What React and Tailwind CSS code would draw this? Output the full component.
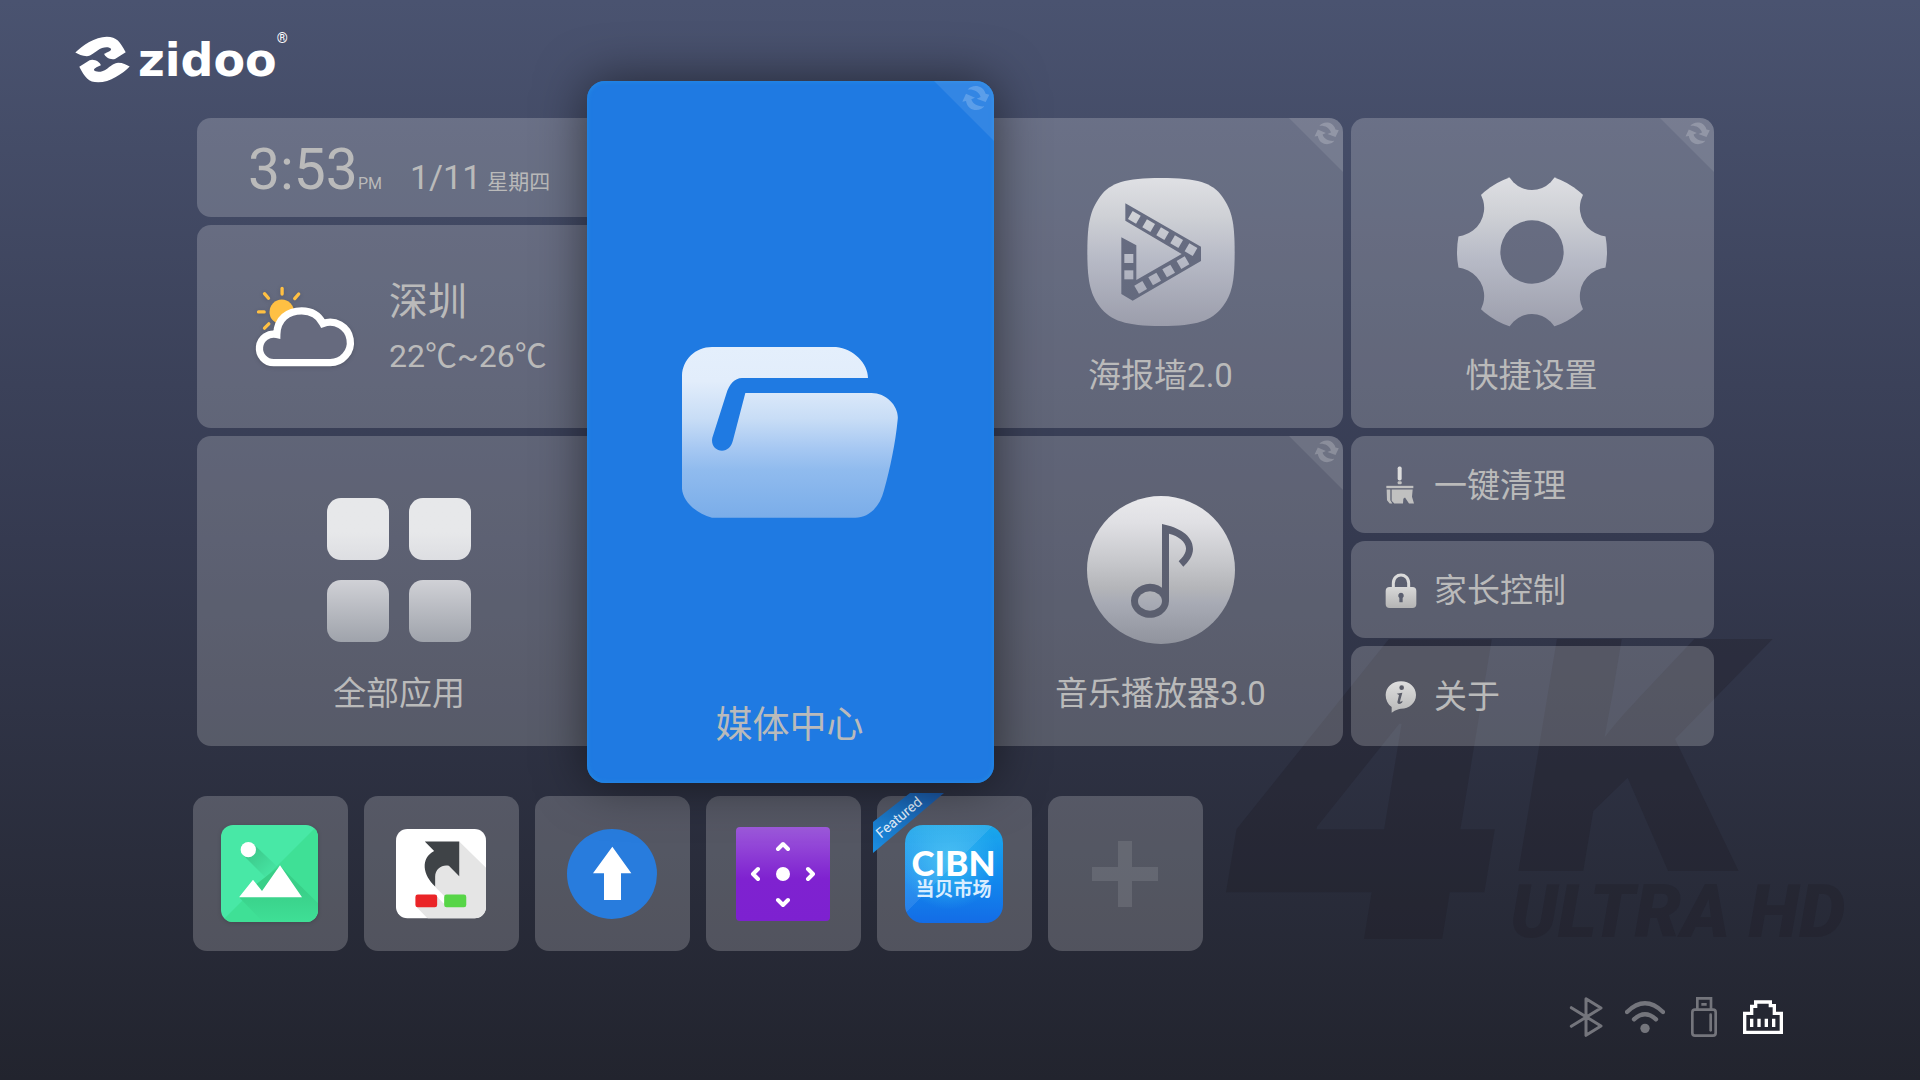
const SANS = "font-['Roboto','Noto_Sans_CJK_SC',sans-serif]"

function Fade({ id, stops }) {
  return (
    <linearGradient id={id} x1="0" y1="0" x2="0" y2="1">
      {stops.map(([offset, color]) => (
        <stop key={offset} offset={offset} stopColor={color} />
      ))}
    </linearGradient>
  )
}

const SILVER = [['0', '#dfe0e4'], ['0.25', '#cfd1d6'], ['0.55', '#b7bac6'], ['1', '#9b9dab']]

/* ---------- big tile icons ---------- */

function AppsIcon() {
  return (
    <div className="grid size-[148px] grid-cols-2 place-content-center justify-items-center gap-5 px-0.5">
      <span className="size-[62px] rounded-[14px] bg-linear-to-b from-[#e7e8ea] from-55% to-[#dddee2]" />
      <span className="size-[62px] rounded-[14px] bg-linear-to-b from-[#e7e8ea] from-55% to-[#dddee2]" />
      <span className="size-[62px] rounded-[14px] bg-linear-to-b from-[#d0d1d6] to-[#9fa3ab]" />
      <span className="size-[62px] rounded-[14px] bg-linear-to-b from-[#d0d1d6] to-[#9fa3ab]" />
    </div>
  )
}

function FolderIcon() {
  return (
    <svg viewBox="0 0 648 513" className="h-[171px] w-[216px]" aria-hidden="true">
      <defs>
        <Fade id="folder" stops={[['0', '#e4effc'], ['0.2', '#e2edfb'], ['0.42', '#c8ddf6'], ['0.6', '#a5c7f2'], ['0.72', '#90bbee'], ['1', '#7aade9']]} />
      </defs>
      <path
        fill="url(#folder)"
        d="M90 0H462C515 5 558 50 558 93H180C158 93 142 112 133 140L91 272C86 295 102 311 120 311C136 311 148 300 153 280L190 138H568C615 138 652 180 647 218C640 290 625 360 606 430C594 480 560 512 520 512H90C40 500 2 460 0 425V85C2 38 40 0 90 0Z"
      />
    </svg>
  )
}

function PosterIcon() {
  const top = [[495, 352], [538, 377], [580, 401], [622, 425], [665, 449]]
  const low = [[641, 488], [598, 513], [556, 537], [514, 562]]
  return (
    <svg viewBox="353 234 444 444" className="size-[148px]" aria-hidden="true">
      <defs>
        <Fade id="poster" stops={SILVER} />
        <mask id="film" maskUnits="userSpaceOnUse" x="353" y="234" width="444" height="444">
          <rect x="353" y="234" width="444" height="444" fill="#fff" />
          <polygon points="468,310 695,440 695,483 490,602 456,582 456,412 501,436 501,540 637,462 468,362" fill="#000" />
          {top.map(([x, y]) => (
            <rect key={x} x={x - 14} y={y - 14} width="28" height="28" fill="#fff" transform={`rotate(30 ${x} ${y})`} />
          ))}
          {low.map(([x, y]) => (
            <rect key={x} x={x - 14} y={y - 14} width="28" height="28" fill="#fff" transform={`rotate(-30 ${x} ${y})`} />
          ))}
          <rect x="465" y="462" width="27" height="27" fill="#fff" />
          <rect x="465" y="511" width="27" height="27" fill="#fff" />
        </mask>
      </defs>
      <path
        mask="url(#film)"
        fill="url(#poster)"
        d="M575 234C684 234 729 248 759 290C787 330 796 364 796 456C796 548 787 584 759 621C727 662 684 678 575 678C469 678 424 662 392 621C364 584 354 548 354 456C354 364 364 330 392 290C422 248 469 234 575 234Z"
      />
    </svg>
  )
}

function GearIcon() {
  return (
    <svg viewBox="384 234 444 444" className="size-[148px] overflow-visible" aria-hidden="true">
      <defs>
        <Fade id="gear" stops={SILVER} />
        <mask id="teeth" maskUnits="userSpaceOnUse" x="370" y="210" width="472" height="492">
          <rect x="370" y="210" width="472" height="492" fill="#fff" />
          <circle cx="606" cy="456" r="95" fill="#000" />
          {[0, 180].map((a) => (
            <circle key={a} cx="606" cy="191" r="79" fill="#000" transform={`rotate(${a} 606 456)`} />
          ))}
          {[60, 120, 240, 300].map((a) => (
            <circle key={a} cx="606" cy="191" r="86" fill="#000" transform={`rotate(${a} 606 456)`} />
          ))}
        </mask>
      </defs>
      <ellipse cx="606" cy="456" rx="225" ry="234" fill="url(#gear)" mask="url(#teeth)" />
    </svg>
  )
}

function MusicIcon() {
  return (
    <svg viewBox="351 228 444 444" className="size-[148px]" aria-hidden="true">
      <defs>
        <Fade id="music" stops={[['0', '#e9e9ec'], ['0.18', '#e0e0e4'], ['0.45', '#c6c7cb'], ['0.62', '#b4b5b9'], ['0.72', '#a8abb5'], ['1', '#90939d']]} />
        <mask id="note" maskUnits="userSpaceOnUse" x="351" y="228" width="444" height="444">
          <rect x="351" y="228" width="444" height="444" fill="#fff" />
          <path
            fill="#000"
            d="M576 312C625 322 669 345 669 387C669 408 655 426 640 440L626 424C640 410 648 400 648 385C648 365 625 348 597 341V543A57 51 0 1 1 576 503Z"
          />
          <ellipse cx="540" cy="543" rx="36" ry="29" fill="#fff" />
        </mask>
      </defs>
      <circle cx="573" cy="450" r="222" fill="url(#music)" mask="url(#note)" />
    </svg>
  )
}

function WeatherIcon() {
  return (
    <svg viewBox="229 556 291 244" className="h-[81px] w-[97px] overflow-visible drop-shadow-sm" aria-hidden="true">
      <g stroke="#ffc043" strokeWidth="10" strokeLinecap="round">
        <path d="M307 563V580M254 579L266 593M236 634H253M254 683L267 670M345 594L357 580" />
      </g>
      <circle cx="306" cy="634" r="37" fill="#ffc043" />
      <path
        d="M282 787A43 43 0 1 1 291 702C292 655 325 631 366 631C395 631 418 645 430 669A61 61 0 1 1 450 787Z"
        fill="#666a7e"
        stroke="#fff"
        strokeWidth="22"
      />
    </svg>
  )
}

/* ---------- small tile icons ---------- */

function BroomIcon() {
  return (
    <svg viewBox="164 136 96 116" className="h-[39px] w-8" fill="#c0c0c0" aria-hidden="true">
      <rect x="202" y="137" width="12" height="42" rx="5" fill="#dcdcdc" />
      <rect x="202" y="181" width="12" height="9" rx="3" />
      <rect x="168" y="195" width="81" height="7" />
      <path d="M169 206H180V238L186 248H178L170 238Z" />
      <path d="M184 206H247L245 228L251 248H236L224 230L219 234L218 248H192L184 240Z" />
    </svg>
  )
}

function LockIcon() {
  return (
    <svg viewBox="164 456 96 106" className="h-9 w-8" aria-hidden="true">
      <defs>
        <Fade id="lock" stops={[['0', '#d8d8d8'], ['1', '#b4b4b4']]} />
      </defs>
      <path d="M189 504V486C189 453 235 453 235 486V504" fill="none" stroke="#dadada" strokeWidth="9" />
      <path
        fill="url(#lock)"
        fillRule="evenodd"
        d="M178 497H246Q258 497 258 509V548Q258 560 246 560H178Q166 560 166 548V509Q166 497 178 497ZM212 514A9 9 0 0 0 207 530V543H217V530A9 9 0 0 0 212 514Z"
      />
    </svg>
  )
}

function InfoIcon() {
  return (
    <svg viewBox="164 782 96 96" className="size-8" aria-hidden="true">
      <defs>
        <Fade id="info" stops={[['0', '#dedede'], ['1', '#b9b9b9']]} />
      </defs>
      <path
        fill="url(#info)"
        d="M212 783C238 783 257 801 257 824C257 848 237 865 212 865C206 865 197 868 184 877V860C172 852 166 839 166 824C166 801 186 783 212 783Z"
      />
      <circle cx="214" cy="802" r="7" fill="#5a5c68" />
      <path d="M199 820L216 817L209 843Q209 846 217 841L215 847Q203 855 201 846L206 824Z" fill="#5a5c68" />
    </svg>
  )
}

/* ---------- dock icons ---------- */

function GalleryApp() {
  return (
    <svg viewBox="124 165 291 291" className="size-[97px] drop-shadow-sm" aria-hidden="true">
      <defs>
        <linearGradient id="sunShade" x1="0" y1="0" x2="1" y2="1">
          <stop offset="0.2" stopColor="#3cc98b" />
          <stop offset="0.9" stopColor="#3cc98b" stopOpacity="0" />
        </linearGradient>
        <linearGradient id="hillShade" x1="0" y1="0" x2="0" y2="1">
          <stop offset="0.4" stopColor="#39cf88" />
          <stop offset="1" stopColor="#3fdf96" />
        </linearGradient>
        <clipPath id="galleryClip">
          <rect x="124" y="165" width="291" height="291" rx="36" />
        </clipPath>
      </defs>
      <g clipPath="url(#galleryClip)">
        <rect x="124" y="165" width="291" height="291" fill="#48e8a6" />
        <path d="M415 165V456H124Z" fill="#3fe096" />
        <path d="M222 223L298 295L262 327L190 255Z" fill="url(#sunShade)" />
        <path d="M301 287L415 400V456H250L178 382Z" fill="url(#hillShade)" />
        <circle cx="206" cy="239" r="23" fill="#fff" />
        <path d="M178 382L220 329L247 363L301 286L367 382Z" fill="#fff" />
      </g>
    </svg>
  )
}

function RemapApp() {
  return (
    <svg viewBox="648 177 269 269" className="size-[90px]" aria-hidden="true">
      <defs>
        <clipPath id="remapClip">
          <rect x="648" y="177" width="269" height="267" rx="34" />
        </clipPath>
      </defs>
      <g clipPath="url(#remapClip)">
        <rect x="648" y="177" width="269" height="269" fill="#fff" />
        <path d="M837 214L917 293V446H744L710 411L770 372L792 396L765 350L740 300Z" fill="#e5e5e5" />
        <path d="M765 350L800 385L790 400L770 378L735 372V330Z" fill="#fff" />
        <path d="M765 349C728 315 720 265 762 243L734 214H837V318L806 287C788 282 765 294 765 320Z" fill="#3f4347" />
        <rect x="706" y="373" width="65" height="38" rx="7" fill="#ea2427" />
        <rect x="792" y="373" width="66" height="38" rx="7" fill="#57d547" />
      </g>
    </svg>
  )
}

function UpdateApp() {
  return (
    <svg viewBox="1161 174 270 270" className="size-[90px]" aria-hidden="true">
      <circle cx="1296" cy="309" r="135" fill="#287cdd" />
      <path d="M1297 227L1354 307H1323V387H1272V307H1239Z" fill="#fff" />
    </svg>
  )
}

function RemoteApp() {
  return (
    <svg viewBox="0 0 94 94" className="size-[94px]" aria-hidden="true">
      <defs>
        <Fade id="remote" stops={[['0', '#9d5adb'], ['0.55', '#7f22d0'], ['1', '#7d21d0']]} />
      </defs>
      <rect width="94" height="94" rx="4" fill="url(#remote)" />
      <circle cx="47" cy="47" r="7" fill="#fff" />
      <path
        d="M42 22L47 17L52 22M42 73L47 78L52 73M22 42L17 47L22 52M72 42L77 47L72 52"
        fill="none"
        stroke="#fff"
        strokeWidth="4"
        strokeLinecap="round"
        strokeLinejoin="round"
      />
    </svg>
  )
}

function MarketApp() {
  return (
    <span className="flex size-[98px] flex-col items-center justify-center rounded-[18px] bg-[linear-gradient(135deg,#ffffff18_45%,transparent_45%),radial-gradient(circle_at_45%_35%,#35b9f2,transparent_60%),linear-gradient(180deg,#1ba9ec,#1289ee_55%,#136ce6)] text-white">
      <span className="font-['Lato'] text-[35px] leading-8 font-black">CIBN</span>
      <span className="text-[19px] leading-6 font-bold text-[#d9edff]">当贝市场</span>
    </span>
  )
}

function FeaturedRibbon() {
  return (
    <svg viewBox="0 0 71 60" className="absolute -top-[3px] -left-1 h-[60px] w-[71px]">
      <defs>
        <linearGradient id="ribbon" x1="0" y1="1" x2="1" y2="0">
          <stop offset="0" stopColor="#1a8fe3" />
          <stop offset="1" stopColor="#1a539f" />
        </linearGradient>
      </defs>
      <polygon points="0,29 37,0 71,0 0,60" fill="url(#ribbon)" />
      <text x="29" y="28" transform="rotate(-40 29 28)" textAnchor="middle" fill="#e3effb" className="text-[14px]">
        Featured
      </text>
    </svg>
  )
}

function PlusIcon() {
  return (
    <svg viewBox="0 0 66 66" className="size-[66px]" aria-hidden="true">
      <path d="M26 0H40V26H66V40H40V66H26V40H0V26H26Z" fill="#fff" fillOpacity="0.1" />
    </svg>
  )
}

/* ---------- tiles ---------- */

const GLASS = 'rounded-[14px] bg-white/20'

function CornerBadge({ size = 'size-[54px]' }) {
  return (
    <svg viewBox="0 0 180 180" className={`absolute top-0 right-0 ${size}`} fill="#fff" aria-hidden="true">
      <path d="M0 0H180V180Z" fillOpacity="0.09" />
      <g fillOpacity="0.2">
        <path d="M101 26C112 12 145 8 155 38L166 41L155 63L128 53L140 48C134 30 116 24 101 26Z" />
        <path d="M96 38L123 50L112 55C116 70 134 78 151 76C140 92 102 94 96 60L85 62Z" />
      </g>
    </svg>
  )
}

function Tile({ icon, label, badge }) {
  return (
    <button
      type="button"
      className={`relative flex flex-col items-center overflow-hidden pt-[60px] pb-7 ${badge ? 'pr-0.5' : ''} ${GLASS}`}
    >
      {icon}
      <span className="mt-[26px] text-[33px] leading-12">{label}</span>
      {badge && <CornerBadge />}
    </button>
  )
}

function FocusedTile() {
  return (
    <button
      type="button"
      className="relative z-10 row-span-2 -mx-[22px] -my-[37px] flex flex-col items-center rounded-[18px] bg-[#1f7ae2] pt-[266px] pr-0.5 pb-[33px] shadow-[0_0_50px_rgba(0,0,0,0.5)]"
    >
      <span className="absolute inset-0 overflow-hidden rounded-[18px] shadow-[inset_0_0_4px_1px_#2389e4]">
        <CornerBadge size="size-[60px]" />
      </span>
      <FolderIcon />
      <span className="mt-auto text-[37px] leading-12">媒体中心</span>
    </button>
  )
}

function RowTile({ icon, label, size }) {
  return (
    <button type="button" className={`flex items-center gap-[17px] pt-0.5 pl-[34px] ${size} ${GLASS}`}>
      {icon}
      <span className="text-[33px] leading-12">{label}</span>
    </button>
  )
}

const DOCK = [
  { name: 'Gallery', icon: <GalleryApp /> },
  { name: 'Key remap', icon: <RemapApp /> },
  { name: 'Update', icon: <UpdateApp /> },
  { name: 'Remote', icon: <RemoteApp /> },
  { name: 'CIBN 当贝市场', icon: <MarketApp />, featured: true },
  { name: 'Add', icon: <PlusIcon /> },
]

/* ---------- page furniture ---------- */

function Logo() {
  const half =
    'M45 93C65 72 105 45 140 45C170 45 180 60 197 92L166 112C152 118 134 106 132 97C140 92 152 90 153 82C148 75 128 74 112 87C97 98 90 103 80 104C65 104 55 98 45 93Z'
  return (
    <div className="flex h-[58px] items-center text-white">
      <svg viewBox="44 44 166 140" className="h-[47px] w-[55px]" fill="#fff" aria-hidden="true">
        <path d={half} />
        <path d={half} transform="rotate(180 127 114)" />
      </svg>
      <span className="ml-2 pt-0.5 font-['DejaVu_Sans'] text-[46px] leading-[58px] font-bold">zidoo</span>
      <span className="self-start text-[14px] leading-4">®</span>
    </div>
  )
}

function Watermark() {
  return (
    <svg viewBox="0 0 640 310" className="absolute right-[60px] bottom-[134px] h-[310px] w-[640px]" fill="#1b1720" fillOpacity="0.25" aria-hidden="true">
      <text x="0" y="303" className="font-['Inter'] text-[412px] font-black italic">4</text>
      <text x="298" y="235" className="font-['Inter'] text-[319px] font-black italic">K</text>
      <text x="290" y="301" className="font-['Roboto'] text-[74px] font-black italic">ULTRA HD</text>
    </svg>
  )
}

function StatusBar() {
  return (
    <div className="flex justify-end gap-[19px] pr-[137px]">
      <svg viewBox="78 51 120 120" className="size-10" fill="none" stroke="#74757c" strokeWidth="9" strokeLinejoin="round" strokeLinecap="round">
        <title>Bluetooth</title>
        <path d="M94 83L183 138L138 166V56L183 84L94 139" />
      </svg>
      <svg viewBox="255 51 120 120" className="size-10" fill="none" stroke="#74757c" strokeWidth="13" strokeLinecap="round">
        <title>Wi-Fi</title>
        <path d="M261 96Q315 44 369 96M282 118Q315 87 348 118" />
        <circle cx="315" cy="145" r="14" fill="#74757c" stroke="none" />
      </svg>
      <svg viewBox="432 51 120 120" className="size-10" fill="none" stroke="#74757c" strokeWidth="8">
        <title>USB</title>
        <path d="M472 88V55H513V88M484 73H500" />
        <rect x="457" y="89" width="70" height="78" rx="8" />
        <path d="M512 104V151" strokeLinecap="round" />
      </svg>
      <svg viewBox="610 51 120 120" className="size-10" fill="none" stroke="#fff" strokeWidth="10">
        <title>Ethernet</title>
        <path d="M615 100H636V79H648V66H692V77H704V100H725V157H615Z" />
        <path d="M636 116V141M658 116V141M680 116V141M702 116V141" />
      </svg>
    </div>
  )
}

export default function App() {
  return (
    <main className={`relative flex min-h-screen flex-col overflow-hidden bg-linear-to-b from-[#4a5370] via-[#353a50] via-50% to-[#22242e] text-[#bababa] ${SANS}`}>
      <Watermark />

      <header className="relative pt-[30px] pl-[75px]">
        <Logo />
      </header>

      <section className="relative mt-[30px] mr-[206px] ml-[197px] grid grid-cols-[404fr_363fr_363fr_363fr] gap-2">
        <div className="flex flex-col gap-2">
          <div className={`flex h-[99px] items-baseline pl-[51px] ${GLASS}`}>
            <span className="text-[57px] leading-[104px]">3:53</span>
            <span className="text-[16px]">PM</span>
            <span className="ml-7 text-[34px]">1/11</span>
            <span className="ml-1.5 text-[21px]">星期四</span>
          </div>
          <div className={`flex grow items-center gap-9 pl-[59px] ${GLASS}`}>
            <WeatherIcon />
            <div className="flex flex-col pt-1 leading-[54px]">
              <span className="text-[39px]">深圳</span>
              <span className="text-[32px]">22℃~26℃</span>
            </div>
          </div>
        </div>

        <FocusedTile />

        <Tile icon={<PosterIcon />} label="海报墙2.0" badge />
        <Tile icon={<GearIcon />} label="快捷设置" badge />

        <Tile icon={<AppsIcon />} label="全部应用" />
        <Tile icon={<MusicIcon />} label="音乐播放器3.0" badge />

        <div className="flex flex-col gap-2">
          <RowTile icon={<BroomIcon />} label="一键清理" size="h-[97px]" />
          <RowTile icon={<LockIcon />} label="家长控制" size="h-[97px]" />
          <RowTile icon={<InfoIcon />} label="关于" size="grow" />
        </div>
      </section>

      <nav className="mt-[50px] ml-[193px] flex gap-4">
        {DOCK.map((app) => (
          <button
            key={app.name}
            type="button"
            aria-label={app.name}
            className={`relative flex size-[155px] items-center justify-center pr-0.5 ${GLASS}`}
          >
            {app.icon}
            {app.featured && <FeaturedRibbon />}
          </button>
        ))}
      </nav>

      <footer className="relative mt-[46px] pb-10">
        <StatusBar />
      </footer>
    </main>
  )
}
